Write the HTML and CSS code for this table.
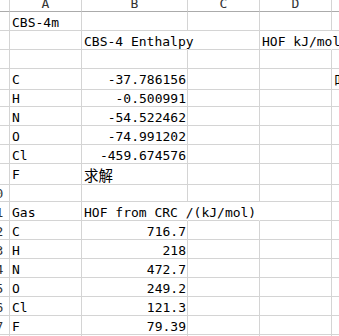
FILE: index.html
```html
<!DOCTYPE html>
<html>
<head>
<meta charset="utf-8">
<link rel="stylesheet" href="styles.css">
</head>
<body>
<div class="sheet">
  <div class="row head">
    <div class="cell rh"></div>
    <div class="cell ch"><span>A</span></div>
    <div class="cell ch"><span>B</span></div>
    <div class="cell ch"><span>C</span></div>
    <div class="cell ch"><span>D</span></div>
    <div class="cell ch"><span>E</span></div>
  </div>
  <div class="row"><div class="cell rh"><span class="num">1</span></div><div class="cell">CBS-4m</div><div class="cell"></div><div class="cell"></div><div class="cell"></div><div class="cell"></div></div>
  <div class="row"><div class="cell rh"><span class="num">2</span></div><div class="cell"></div><div class="cell ov">CBS-4 Enthalpy</div><div class="cell"></div><div class="cell ov">HOF kJ/mol</div><div class="cell"></div></div>
  <div class="row"><div class="cell rh"><span class="num">3</span></div><div class="cell"></div><div class="cell"></div><div class="cell"></div><div class="cell"></div><div class="cell"></div></div>
  <div class="row"><div class="cell rh"><span class="num">4</span></div><div class="cell">C</div><div class="cell r">-37.786156</div><div class="cell"></div><div class="cell"></div><div class="cell"><span class="cjk">叫</span></div></div>
  <div class="row"><div class="cell rh"><span class="num">5</span></div><div class="cell">H</div><div class="cell r">-0.500991</div><div class="cell"></div><div class="cell"></div><div class="cell"></div></div>
  <div class="row"><div class="cell rh"><span class="num">6</span></div><div class="cell">N</div><div class="cell r">-54.522462</div><div class="cell"></div><div class="cell"></div><div class="cell"></div></div>
  <div class="row"><div class="cell rh"><span class="num">7</span></div><div class="cell">O</div><div class="cell r">-74.991202</div><div class="cell"></div><div class="cell"></div><div class="cell"></div></div>
  <div class="row"><div class="cell rh"><span class="num">8</span></div><div class="cell">Cl</div><div class="cell r">-459.674576</div><div class="cell"></div><div class="cell"></div><div class="cell"></div></div>
  <div class="row"><div class="cell rh"><span class="num">9</span></div><div class="cell">F</div><div class="cell"><span class="cjk">求解</span></div><div class="cell"></div><div class="cell"></div><div class="cell"></div></div>
  <div class="row"><div class="cell rh"><span class="num">10</span></div><div class="cell"></div><div class="cell"></div><div class="cell"></div><div class="cell"></div><div class="cell"></div></div>
  <div class="row"><div class="cell rh"><span class="num">11</span></div><div class="cell">Gas</div><div class="cell ov">HOF from CRC /(kJ/mol)</div><div class="cell ov"></div><div class="cell"></div><div class="cell"></div></div>
  <div class="row"><div class="cell rh"><span class="num">12</span></div><div class="cell">C</div><div class="cell r">716.7</div><div class="cell"></div><div class="cell"></div><div class="cell"></div></div>
  <div class="row"><div class="cell rh"><span class="num">13</span></div><div class="cell">H</div><div class="cell r">218</div><div class="cell"></div><div class="cell"></div><div class="cell"></div></div>
  <div class="row"><div class="cell rh"><span class="num">14</span></div><div class="cell">N</div><div class="cell r">472.7</div><div class="cell"></div><div class="cell"></div><div class="cell"></div></div>
  <div class="row"><div class="cell rh"><span class="num">15</span></div><div class="cell">O</div><div class="cell r">249.2</div><div class="cell"></div><div class="cell"></div><div class="cell"></div></div>
  <div class="row"><div class="cell rh"><span class="num">16</span></div><div class="cell">Cl</div><div class="cell r">121.3</div><div class="cell"></div><div class="cell"></div><div class="cell"></div></div>
  <div class="row"><div class="cell rh"><span class="num">17</span></div><div class="cell">F</div><div class="cell r">79.39</div><div class="cell"></div><div class="cell"></div><div class="cell"></div></div>
  <div class="row"><div class="cell rh"><span class="num">18</span></div><div class="cell"></div><div class="cell"></div><div class="cell"></div><div class="cell"></div><div class="cell"></div></div>
</div>
</body>
</html>
```

FILE: styles.css
```css
html, body {
  margin: 0;
  padding: 0;
  background: #ffffff;
  overflow: hidden;
}

.sheet {
  width: 339px;
  height: 336px;
  overflow: hidden;
  font-family: "DejaVu Sans Mono", "Liberation Mono", monospace;
  font-size: 13px;
  color: #000;
}

.row {
  display: grid;
  grid-template-columns: 10px 72px 106px 72px 72px 40px;
  height: 19px;
}

.row.head {
  height: 12px;
}

.cell {
  box-sizing: border-box;
  border-right: 1px solid #d4d4d4;
  border-bottom: 1px solid #d4d4d4;
  padding: 4px 1px 0 2px;
  line-height: 14px;
  white-space: nowrap;
  overflow: visible;
}

.cell.r {
  text-align: right;
  padding-right: 1px;
}

.cell.ov {
  border-right-color: transparent;
}

.head .cell {
  border-bottom-color: #ababab;
  padding: 0;
  line-height: 7px;
  text-align: center;
  color: #333;
  overflow: hidden;
}

.cell.rh {
  padding: 4px 0 0 0;
  overflow: hidden;
  color: #333;
}

.num {
  display: block;
  width: 27px;
  margin-left: -18px;
  text-align: center;
}

.cjk {
  font-family: "Noto Sans CJK SC", sans-serif;
  font-size: 14.5px;
  line-height: 14px;
}
```
